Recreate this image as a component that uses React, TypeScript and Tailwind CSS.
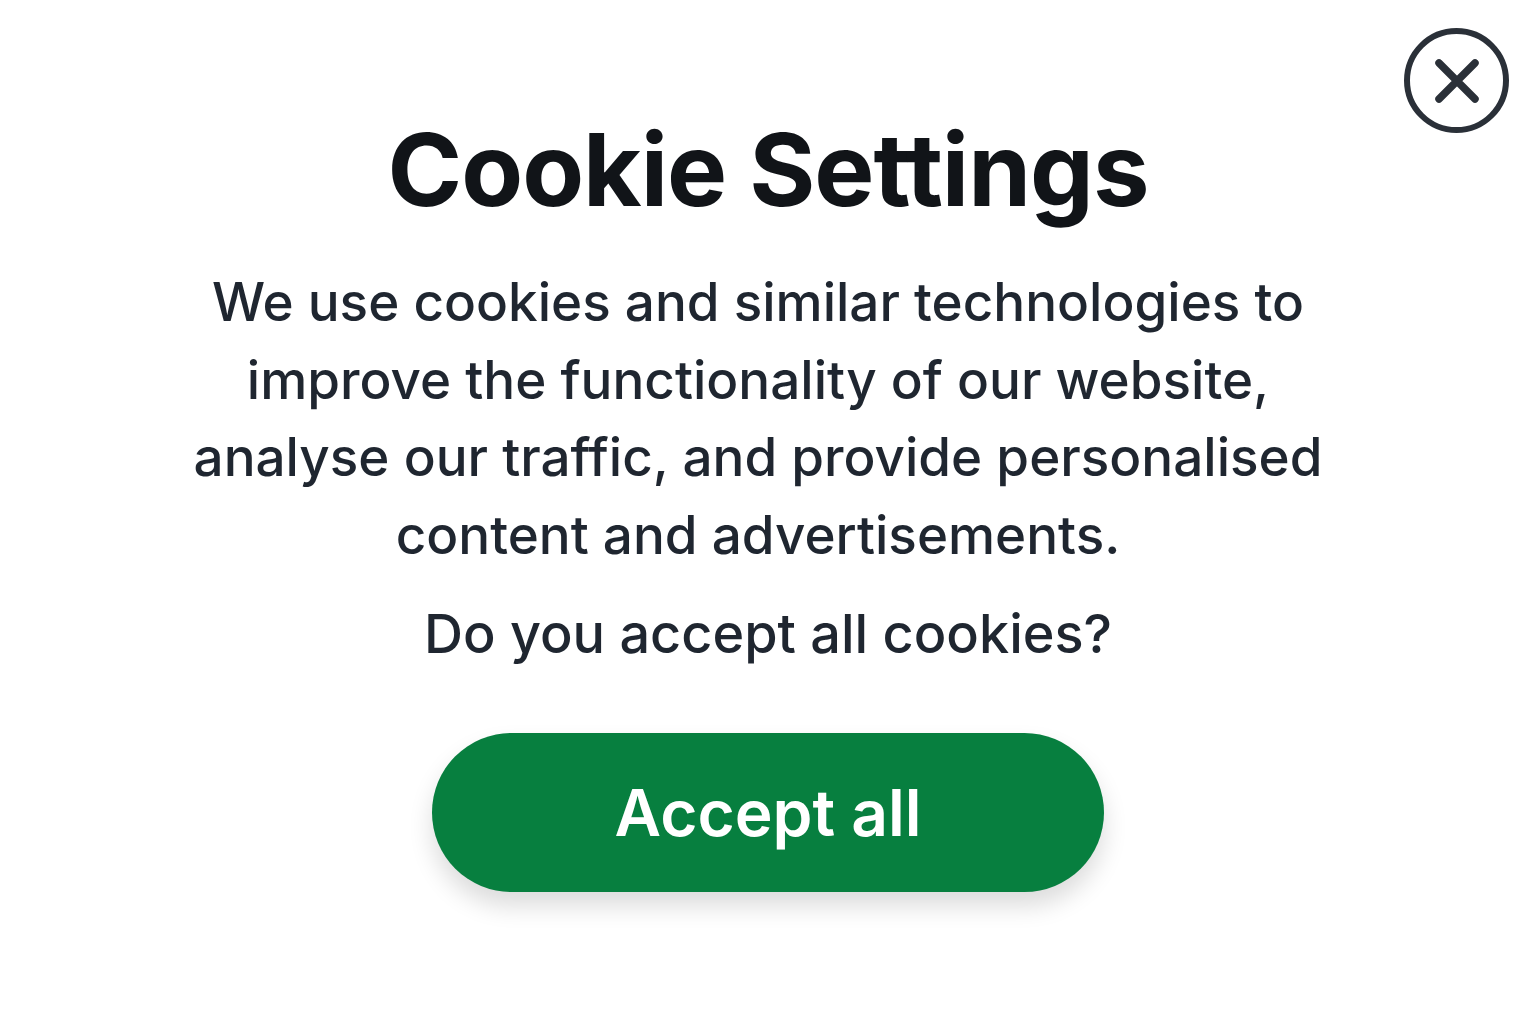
export default function App() {
  return (
    <div
      className="relative min-h-[1024px] w-full bg-white text-[#1f2630]"
      style={{ fontFamily: "Inter, 'Noto Sans', sans-serif" }}
    >
      {/* Close */}
      <button className="absolute left-[1404px] top-[28px] flex h-[105px] w-[105px] items-center justify-center rounded-full border-[6px] border-[#2a3038]">
        <svg width="48" height="48" viewBox="0 0 48 48" fill="none">
          <path d="M6 6 L42 42 M42 6 L6 42" stroke="#2a3038" strokeWidth="7.5" strokeLinecap="round" />
        </svg>
      </button>

      <div className="flex flex-col items-center pt-[104px]">
        <h1 className="text-[101px] font-bold leading-[130px] tracking-[-1px] text-[#111418]">Cookie Settings</h1>
        <p className="mr-[20px] mt-[30px] w-[1170px] text-center text-[53px] font-medium leading-[77.5px]">
          We use cookies and similar technologies to improve the functionality of our website, analyse our
          traffic, and provide personalised content and advertisements.
        </p>
        <p className="mt-[21px] text-[54px] font-medium leading-[77px]">Do you accept all cookies?</p>
        <button className="mt-[61px] flex h-[159px] w-[672px] items-center justify-center rounded-full bg-[#077f3f] text-[64px] font-semibold text-white shadow-[0_14px_24px_rgba(0,0,0,0.14)]">
          Accept all
        </button>
      </div>
    </div>
  );
}
